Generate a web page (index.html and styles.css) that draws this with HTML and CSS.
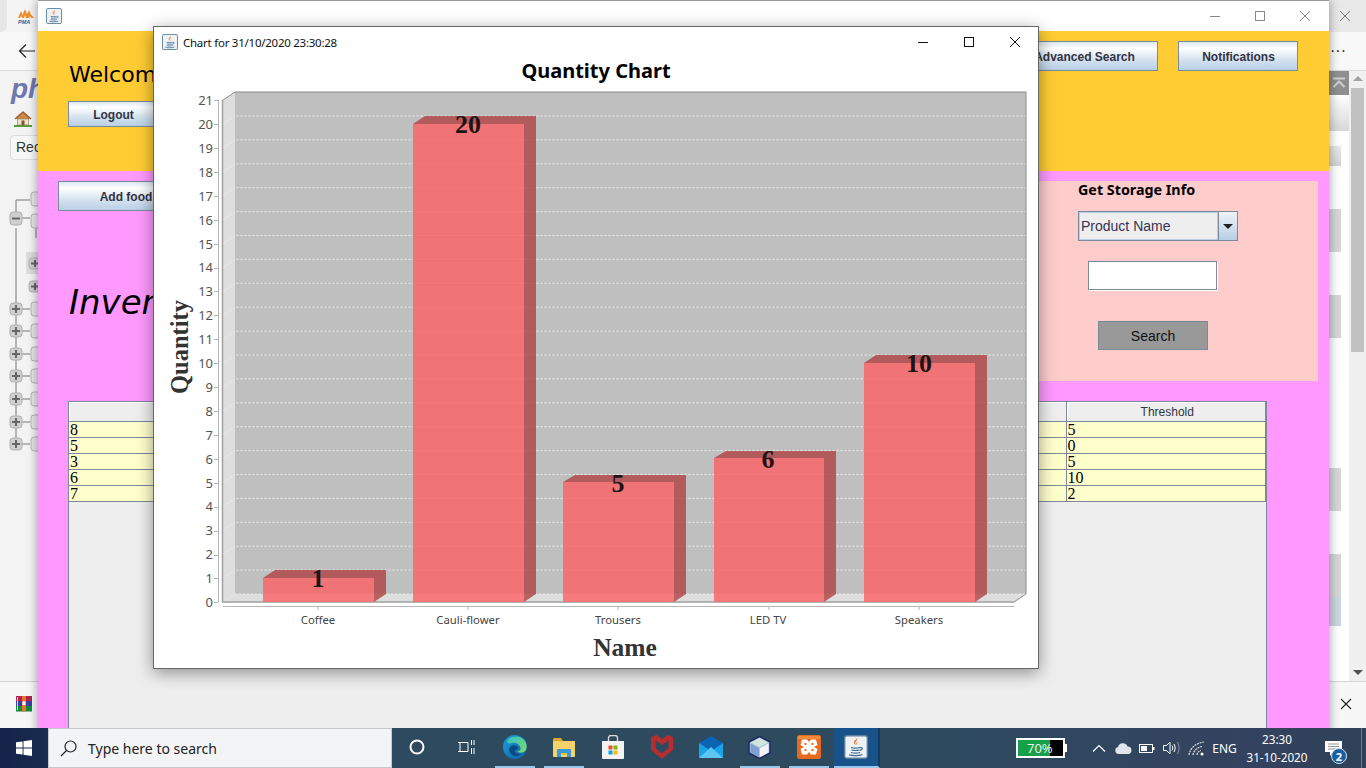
FILE: index.html
```html
<!DOCTYPE html>
<html lang="en">
<head>
    <meta charset="UTF-8">
    <meta name="viewport" content="width=device-width, initial-scale=1.0">
    <title>Chart for 31/10/2020 23:30:28</title>
    <link rel="stylesheet" href="styles.css">
</head>
<body>
    <svg class="icon-defs" width="0" height="0">
        <symbol id="java-icon" viewBox="0 0 24 24">
            <rect x="0.7" y="0.7" width="22.6" height="22.6" rx="2" fill="#eef2f5" stroke="#5d7f9c" stroke-width="1.4"/>
            <path d="M13 3c1.5 2-2.5 3.500-1.500 6 .4 1 1 1.500 1 1.500-2-1-3-2.500-2.300-4.200C10.800 5 12.800 4.500 13 3z" fill="#e8762b"/>
            <path d="M15 6.500c-2 1-3 2-2.200 3.500-.9-.5-1.100-1.600-.4-2.300.6-.6 1.600-.9 2.600-1.200z" fill="#e8762b"/>
            <path d="M7 12.500c2 .6 7 .6 9 0M7.500 15c2 .5 6 .5 8 0M7 17.500c2 .6 7 .6 9 0M5 19.800c3 1.200 10 1.200 13.500-.3M16 12.700c2-.5 3 .5 1.800 1.700-.5.500-1.300.8-2 1" fill="none" stroke="#3d6a94" stroke-width="1.200"/>
        </symbol>
    </svg>

    <div class="desktop">
        <!-- browser behind everything -->
        <div class="browser">
            <div class="tabstrip">
                <div class="tab-left"></div>
                <svg class="pma-logo" width="18" height="16" viewBox="0 0 18 16">
                    <path d="M1 10 4 3l1.500 4L8 1l2 5 2-4 1.500 4L17 10h-3l-1-2-1 2H9L8 7l-1 3H5L4 8l-1 2z" fill="#f0902c"/>
                    <text x="1" y="15.500" class="pma-text">PMA</text>
                </svg>
                <div class="tab-spacer"></div>
                <div class="tab-close">
                    <svg width="12" height="12" viewBox="0 0 12 12"><path d="M1 1l10 10M11 1 1 11" stroke="#777" stroke-width="1" fill="none"/></svg>
                </div>
            </div>
            <div class="toolbar">
                <svg class="back-arrow" width="18" height="16" viewBox="0 0 18 16"><path d="M17 8H2M8 1.500 1.500 8 8 14.500" stroke="#222" stroke-width="1.200" fill="none"/></svg>
                <span class="dots">&middot;&middot;&middot;</span>
            </div>
            <div class="browser-main">
                <div class="pma-side">
                    <div class="pma-brand">ph</div>
                    <svg class="home-icon" width="18" height="16" viewBox="0 0 18 16">
                        <path d="M1 8 9 1l8 7" fill="#c98a4a" stroke="#a5602a" stroke-width="1.500"/>
                        <path d="M3.500 8h11v6h-11z" fill="#f1e4c8" stroke="#8a7a5a" stroke-width=".6"/>
                        <path d="M7.500 9.500h3V14h-3z" fill="#7a5a3a"/>
                        <path d="M0 15h18" stroke="#5a9a3a" stroke-width="2"/>
                    </svg>
                    <div class="recent-btn">Rec</div>
                    <svg class="tree" width="38" height="280" viewBox="0 0 38 280">
                        <path d="M16 30V12H30M16 30H30M36 40V50M16 40V258M16 121H30M16 143H30M16 166H30M16 188H30M16 211H30M16 234H30M16 256H30" stroke="#777" fill="none"/>
                        <g class="tree-db">
                            <rect x="31" y="4" width="10" height="14" rx="3"/>
                            <rect x="31" y="26" width="10" height="14" rx="3"/>
                            <rect x="31" y="114" width="10" height="14" rx="3"/>
                            <rect x="31" y="136" width="10" height="14" rx="3"/>
                            <rect x="31" y="159" width="10" height="14" rx="3"/>
                            <rect x="31" y="181" width="10" height="14" rx="3"/>
                            <rect x="31" y="204" width="10" height="14" rx="3"/>
                            <rect x="31" y="227" width="10" height="14" rx="3"/>
                            <rect x="31" y="249" width="10" height="14" rx="3"/>
                        </g>
                        <rect x="26" y="64" width="12" height="22" fill="#ddd"/>
                        <g class="tree-toggle">
                            <rect x="10" y="24" width="12" height="13" rx="3"/>
                            <rect x="29" y="70" width="12" height="11" rx="3"/>
                            <rect x="29" y="93" width="12" height="11" rx="3"/>
                            <rect x="10" y="115" width="12" height="12" rx="3"/>
                            <rect x="10" y="137" width="12" height="12" rx="3"/>
                            <rect x="10" y="160" width="12" height="12" rx="3"/>
                            <rect x="10" y="182" width="12" height="12" rx="3"/>
                            <rect x="10" y="205" width="12" height="12" rx="3"/>
                            <rect x="10" y="228" width="12" height="12" rx="3"/>
                            <rect x="10" y="250" width="12" height="12" rx="3"/>
                        </g>
                        <path class="tree-sign" d="M12 30.500h8M31 75.500h8M35 72v7M31 98.500h8M35 95v7M12 121h8M16 117v8M12 143h8M16 139v8M12 166h8M16 162v8M12 188h8M16 184v8M12 211h8M16 207v8M12 234h8M16 230v8M12 256h8M16 252v8"/>
                    </svg>
                </div>
                <div class="pma-spacer"></div>
                <div class="pma-right">
                    <div class="collapse-btn">
                        <svg width="14" height="12" viewBox="0 0 14 12"><path d="M1 1.500h12M1.500 10 7 4.500 12.500 10" stroke="#cfcfcf" stroke-width="2" fill="none"/></svg>
                    </div>
                    <div class="pane-head"></div>
                    <div class="band band-a"></div>
                    <div class="band band-b"></div>
                    <div class="band band-c"></div>
                    <div class="band band-d"></div>
                    <div class="band band-e"></div>
                    <div class="band band-blue"></div>
                </div>
                <div class="pma-scroll">
                    <div class="arrow-up"></div>
                    <div class="scroll-thumb"></div>
                    <div class="arrow-down"></div>
                </div>
            </div>
            <div class="shelf">
                <svg width="16" height="16" viewBox="0 0 16 16">
                    <rect y="0" width="16" height="5" fill="#b3234f"/>
                    <rect y="5" width="16" height="5" fill="#3c3fa5"/>
                    <rect y="10" width="16" height="5.500" fill="#128a3c"/>
                    <rect x="6" width="4" height="15.500" fill="#e8752a"/>
                    <rect x="6.500" y="5.500" width="3" height="3.500" fill="#fff"/>
                    <rect x="1" y="1" width="1" height="13" fill="#f3e27a"/>
                </svg>
                <svg width="12" height="12" viewBox="0 0 12 12"><path d="M1 1l10 10M11 1 1 11" stroke="#222" stroke-width="1.100" fill="none"/></svg>
            </div>
        </div>

        <!-- java main window -->
        <div class="app-window">
            <div class="titlebar app-title">
                <svg class="title-icon" width="16" height="16"><use href="#java-icon"/></svg>
                <div class="win-controls">
                    <svg width="12" height="12" viewBox="0 0 12 12"><path d="M1 6.500h10" stroke="#888"/></svg>
                    <svg width="12" height="12" viewBox="0 0 12 12"><rect x="1.500" y="1.500" width="9" height="9" fill="none" stroke="#888"/></svg>
                    <svg width="12" height="12" viewBox="0 0 12 12"><path d="M1 1l10 10M11 1 1 11" stroke="#888" fill="none"/></svg>
                </div>
            </div>
            <div class="app-head">
                <div class="head-left">
                    <div class="welcome">Welcome</div>
                    <button class="java-btn logout-btn">Logout</button>
                </div>
                <div class="head-right">
                    <button class="java-btn advanced-btn">Advanced Search</button>
                    <button class="java-btn notify-btn">Notifications</button>
                </div>
            </div>
            <div class="app-body">
                <div class="body-top">
                    <div class="body-left">
                        <button class="java-btn add-btn">Add food</button>
                        <div class="inventory">Inventory</div>
                    </div>
                    <div class="storage-panel">
                        <div class="storage-title">Get Storage Info</div>
                        <div class="combo">
                            <span class="combo-value">Product Name</span>
                            <span class="combo-arrow"></span>
                        </div>
                        <input class="storage-input" type="text">
                        <button class="search-btn">Search</button>
                    </div>
                </div>
                <div class="stock-wrap">
                    <table class="stock-table">
                        <tr>
                            <th></th><th></th><th></th><th></th><th></th><th>Threshold</th>
                        </tr>
                        <tr><td>8</td><td></td><td></td><td></td><td></td><td>5</td></tr>
                        <tr><td>5</td><td></td><td></td><td></td><td></td><td>0</td></tr>
                        <tr><td>3</td><td></td><td></td><td></td><td></td><td>5</td></tr>
                        <tr><td>6</td><td></td><td></td><td></td><td></td><td>10</td></tr>
                        <tr><td>7</td><td></td><td></td><td></td><td></td><td>2</td></tr>
                    </table>
                </div>
            </div>
        </div>

        <!-- chart window -->
        <div class="chart-window">
            <div class="titlebar chart-title">
                <svg class="title-icon" width="16" height="16"><use href="#java-icon"/></svg>
                <span class="title-text">Chart for 31/10/2020 23:30:28</span>
                <div class="win-controls">
                    <svg width="12" height="12" viewBox="0 0 12 12"><path d="M1 6.500h10" stroke="#111"/></svg>
                    <svg width="12" height="12" viewBox="0 0 12 12"><rect x="1.500" y="1.500" width="9" height="9" fill="none" stroke="#111"/></svg>
                    <svg width="12" height="12" viewBox="0 0 12 12"><path d="M1 1l10 10M11 1 1 11" stroke="#111" fill="none"/></svg>
                </div>
            </div>
            <svg class="chart" width="884" height="611" viewBox="154 57 884 611">
                <text x="596" y="78" text-anchor="middle" class="chart-heading">Quantity Chart</text>

                <!-- plot walls -->
                <rect x="235" y="92" width="791" height="502" fill="#bfbfbf"/>
                <path d="M223 100 235 92V594L223 602z" fill="#dedede"/>
                <path d="M223 602 235 594H1026L1014 602z" fill="#dedede"/>
                <path class="gridlines" d="M223 578.100 235 570.100H1026M223 554.200 235 546.200H1026M223 530.300 235 522.300H1026M223 506.400 235 498.400H1026M223 482.500 235 474.500H1026M223 458.600 235 450.600H1026M223 434.700 235 426.700H1026M223 410.800 235 402.800H1026M223 386.900 235 378.900H1026M223 363 235 355H1026M223 339.100 235 331.100H1026M223 315.200 235 307.200H1026M223 291.300 235 283.300H1026M223 267.400 235 259.400H1026M223 243.500 235 235.500H1026M223 219.600 235 211.600H1026M223 195.700 235 187.700H1026M223 171.800 235 163.800H1026M223 147.900 235 139.900H1026M223 124 235 116H1026M235 594H1026"/>
                <path d="M223 100 235 92H1026V594L1014 602" fill="none" stroke="#8a8a8a"/>
                <path d="M222.500 100V602H1014" fill="none" stroke="#a0a0a0" stroke-width="1.500"/>

                <!-- axes -->
                <path class="axis" d="M218.500 100V602M214 100.500H218M214 124.500H218M214 148.500H218M214 172.500H218M214 196.500H218M214 220.500H218M214 244.500H218M214 268.500H218M214 291.500H218M214 315.500H218M214 339.500H218M214 363.500H218M214 387.500H218M214 411.500H218M214 435.500H218M214 459.500H218M214 483.500H218M214 507.500H218M214 531.500H218M214 555.500H218M214 578.500H218M214 602.500H218"/>
                <path class="axis" d="M223 606.500H1014M318 606V610M468 606V610M618 606V610M769 606V610M919 606V610"/>
                <g class="tick-labels" text-anchor="end">
                    <text x="213" y="105">21</text><text x="213" y="129">20</text><text x="213" y="153">19</text>
                    <text x="213" y="177">18</text><text x="213" y="201">17</text><text x="213" y="225">16</text>
                    <text x="213" y="249">15</text><text x="213" y="272">14</text><text x="213" y="296">13</text>
                    <text x="213" y="320">12</text><text x="213" y="344">11</text><text x="213" y="368">10</text>
                    <text x="213" y="392">9</text><text x="213" y="416">8</text><text x="213" y="440">7</text>
                    <text x="213" y="464">6</text><text x="213" y="488">5</text><text x="213" y="511">4</text>
                    <text x="213" y="535">3</text><text x="213" y="559">2</text><text x="213" y="583">1</text>
                    <text x="213" y="607">0</text>
                </g>
                <g class="category-labels" text-anchor="middle">
                    <text x="318" y="624">Coffee</text><text x="468" y="624">Cauli-flower</text>
                    <text x="618" y="624">Trousers</text><text x="768" y="624">LED TV</text>
                    <text x="919" y="624">Speakers</text>
                </g>

                <!-- bars: front, top, side -->
                <g class="bar-shade">
                    <path d="M263 578 275 570H386L374 578zM374 578 386 570V594L374 602z"/>
                    <path d="M413 124 425 116H536L524 124zM524 124 536 116V594L524 602z"/>
                    <path d="M563 482 575 475H686L674 482zM674 482 686 475V594L674 602z"/>
                    <path d="M714 458 726 451H836L824 458zM824 458 836 451V594L824 602z"/>
                    <path d="M864 363 876 355H987L975 363zM975 363 987 355V594L975 602z"/>
                </g>
                <g class="bar-front">
                    <rect x="263" y="578" width="111" height="24"/>
                    <rect x="413" y="124" width="111" height="478"/>
                    <rect x="563" y="482" width="111" height="120"/>
                    <rect x="714" y="458" width="110" height="144"/>
                    <rect x="864" y="363" width="111" height="239"/>
                </g>
                <g class="bar-values" text-anchor="middle">
                    <text x="318" y="587">1</text><text x="468" y="133">20</text>
                    <text x="618" y="492">5</text><text x="768" y="468">6</text>
                    <text x="919" y="372">10</text>
                </g>

                <text x="625" y="656" text-anchor="middle" class="axis-title">Name</text>
                <text transform="translate(188 347) rotate(-90)" text-anchor="middle" class="axis-title axis-title-y">Quantity</text>
            </svg>
        </div>
    </div>

    <div class="taskbar">
        <div class="start-btn">
            <svg width="16" height="16" viewBox="0 0 16 16"><path d="M0 2.300 6.600 1.400V7.600H0zM7.500 1.300 16 0V7.600H7.500zM0 8.400H6.600V14.600L0 13.700zM7.500 8.400H16V16L7.500 14.700z" fill="#fff"/></svg>
        </div>
        <div class="search-box">
            <svg width="17" height="17" viewBox="0 0 17 17"><circle cx="10.500" cy="6.500" r="5.500" fill="none" stroke="#222" stroke-width="1.200"/><path d="M6.500 10.500 1 16" stroke="#222" stroke-width="1.300"/></svg>
            <span>Type here to search</span>
        </div>
        <div class="task-icon">
            <svg width="16" height="16" viewBox="0 0 16 16"><circle cx="8" cy="8" r="6.500" fill="none" stroke="#fff" stroke-width="2"/></svg>
        </div>
        <div class="task-icon">
            <svg width="18" height="16" viewBox="0 0 18 16"><path d="M1 3.500h10M1 12.500h10M3 3.500v9h8M11 3.500v9M14.500 1v5M14.500 9v6M17 1v5M17 9v6" fill="none" stroke="#fff" stroke-width="1"/></svg>
        </div>
        <div class="task-icon running">
            <svg width="24" height="24" viewBox="0 0 24 24">
                <defs>
                    <linearGradient id="edge-a" x1="0" y1="0" x2="1" y2="1"><stop offset="0" stop-color="#1f9fd8"/><stop offset="1" stop-color="#0c5fa8"/></linearGradient>
                    <linearGradient id="edge-b" x1="0" y1="0" x2="1" y2="1"><stop offset="0" stop-color="#35c1d0"/><stop offset="1" stop-color="#7fdc5c"/></linearGradient>
                </defs>
                <circle cx="12" cy="12" r="12" fill="url(#edge-a)"/>
                <path d="M4 6C8 0 18 0 22 6c2.500 4 2 9-1 11-3 1.500-6.500.5-6.500-1 2 .5 3.500-1 3-3-.5-4-5-6-9-5-2 .5-3.500 1-4.500-2z" fill="url(#edge-b)"/>
                <path d="M6 15c0-4 5-6 8-4 1.500 1 1.500 3 0 3.500-2 .5-3 1.500-1 3.500 1 1 3 1.500 5 1-4 4-10 2.500-12-4z" fill="#0b4a86"/>
            </svg>
        </div>
        <div class="task-icon running">
            <svg width="22" height="19" viewBox="0 0 22 19">
                <path d="M0 1.500C0 .7.700 0 1.500 0H8l2 3h10.500c.8 0 1.500.7 1.500 1.500V7H0z" fill="#e0a526"/>
                <path d="M0 3h22v15a1 1 0 0 1-1 1H1a1 1 0 0 1-1-1z" fill="#f5d26b"/>
                <path d="M4 17v-5c0-.6.400-1 1-1h12c.6 0 1 .4 1 1v7h-4v-4H8v4H4z" fill="#3a9ad9"/>
                <path d="M8 15h6v2H8z" fill="#f3c234"/>
            </svg>
        </div>
        <div class="task-icon">
            <svg width="24" height="24" viewBox="0 0 24 24">
                <path d="M7.500 6V3c0-1.500 1-2.500 2.500-2.500h4c1.500 0 2.500 1 2.500 2.500v3" fill="none" stroke="#d9d9d9" stroke-width="1.400"/>
                <path d="M1 6h22v17a1 1 0 0 1-1 1H2a1 1 0 0 1-1-1z" fill="#f3f3f3"/>
                <rect x="7.500" y="10.500" width="4" height="4" fill="#e8502a"/>
                <rect x="12.500" y="10.500" width="4" height="4" fill="#7fba00"/>
                <rect x="7.500" y="15.500" width="4" height="4" fill="#00a4ef"/>
                <rect x="12.500" y="15.500" width="4" height="4" fill="#ffb900"/>
            </svg>
        </div>
        <div class="task-icon">
            <svg width="22" height="24" viewBox="0 0 22 24"><path d="M0 2 5.500 0 11 4 16.500 0 22 2V15L11 24 0 15zM4.500 5.500V13L11 18.500 17.500 13V5.500L11 10z" fill="#b52d2f" fill-rule="evenodd"/></svg>
        </div>
        <div class="task-icon">
            <svg width="24" height="22" viewBox="0 0 24 22">
                <path d="M0 7 12 0 24 7 12 15z" fill="#0a63b3"/>
                <path d="M0 7 12 15 24 7V22H0z" fill="#1ba3ea"/>
                <path d="M0 22 12 11 24 22z" fill="#5cc6f3"/>
            </svg>
        </div>
        <div class="task-icon running">
            <svg width="23" height="23" viewBox="0 0 23 23">
                <path d="M11.500.5 22 6V17L11.500 22.500 1 17V6z" fill="#a9c6dd" stroke="#1f2a5c" stroke-width="1.500"/>
                <path d="M11.500 2 20.500 6.500 11.500 11 2.500 6.500z" fill="#cfe6dd"/>
                <path d="M2.500 7.500 11 12V21L2.500 16.500z" fill="#7e9fd0"/>
                <path d="M20.500 7.500 12 12V21L20.500 16.500z" fill="#f2f4f6"/>
            </svg>
        </div>
        <div class="task-icon running">
            <svg width="24" height="24" viewBox="0 0 24 24">
                <rect width="24" height="24" rx="2.500" fill="#e86a1f"/>
                <rect x="1" y="1" width="22" height="3" fill="#f28a3c"/>
                <path d="M5 4.500h5L12 7l2-2.500h5l1.500 5.500-3.500 2 3.500 2-1.500 5.500h-5L12 17l-2 2.500H5L3.500 14 7 12 3.500 10zM7.500 8v2h2V8zM14.500 8v2h2V8zM7.500 14v2h2v-2zM14.500 14v2h2v-2z" fill="#fff" fill-rule="evenodd"/>
            </svg>
        </div>
        <div class="task-icon java-task">
            <svg width="24" height="24"><use href="#java-icon"/></svg>
        </div>

        <div class="tray">
            <div class="tray-slot battery-slot">
                <div class="battery-meter"><span class="battery-fill"></span><span class="battery-text">70%</span></div>
                <div class="battery-cap"></div>
            </div>
            <div class="tray-slot">
                <svg width="14" height="8" viewBox="0 0 14 8"><path d="M1 7.500 7 1.500l6 6" fill="none" stroke="#fff" stroke-width="1.200"/></svg>
            </div>
            <div class="tray-slot">
                <svg width="17" height="11" viewBox="0 0 17 11"><path d="M3.500 11a3.500 3.500 0 0 1-.5-6.900A5 5 0 0 1 12.500 3.500 3.800 3.800 0 0 1 13.500 11z" fill="#dfe5ea"/></svg>
            </div>
            <div class="tray-slot">
                <svg width="16" height="9" viewBox="0 0 16 9"><rect x=".5" y=".5" width="13" height="8" fill="none" stroke="#fff"/><rect x="2" y="2" width="6" height="5" fill="#fff"/><rect x="14" y="3" width="1.500" height="3" fill="#fff"/></svg>
            </div>
            <div class="tray-slot">
                <svg width="17" height="14" viewBox="0 0 17 14"><path d="M.5 4.500h3L7 1v12L3.500 9.500h-3z" fill="none" stroke="#fff"/><path d="M9 4.500c1 1.500 1 3.500 0 5M11 3c1.500 2.500 1.500 5.500 0 8" fill="none" stroke="#fff"/><path d="M14.500 1c2 3.500 2 8.500 0 12" fill="none" stroke="#8a98a5"/></svg>
            </div>
            <div class="tray-slot wifi-slot">
                <svg width="18" height="15" viewBox="0 0 18 15"><path d="M1 14C2 7 8 2 16 1M5 14C5.500 10 9 6.500 14 5.500M9 14c0-2 1.500-4 4-4.500" fill="none" stroke="#e6e6e6" stroke-width="1.200" stroke-dasharray="2 .8"/><circle cx="14" cy="13" r="1.500" fill="#fff"/></svg>
            </div>
            <div class="tray-slot lang-slot">ENG</div>
            <div class="tray-slot clock-slot">
                <span>23:30</span>
                <span>31-10-2020</span>
            </div>
            <div class="tray-slot notify-slot">
                <svg width="17" height="15" viewBox="0 0 17 15"><path d="M0 0h17v11H8l-3 4v-4H0z" fill="#fff"/><path d="M3 3h11M3 5.500h11M3 8h8" stroke="#777" stroke-width=".8"/></svg>
                <span class="notify-badge">2</span>
            </div>
            <div class="show-desktop"></div>
        </div>
    </div>
</body>
</html>
```

FILE: styles.css
```css
* {
    box-sizing: border-box;
}
html, body {
    margin: 0;
    padding: 0;
}
body {
    width: 1366px;
    height: 768px;
    overflow: hidden;
    font-family: "Liberation Sans", Arial, sans-serif;
    background-color: #f3f3f3;
}
.icon-defs {
    position: absolute;
}
.desktop {
    position: relative;
    width: 1366px;
    height: 728px;
    overflow: hidden;
}

/* browser */
.browser {
    display: flex;
    flex-direction: column;
    height: 728px;
    background-color: #f7f7f7;
}
.tabstrip {
    display: flex;
    align-items: center;
    height: 32px;
    background-color: #f4f4f4;
}
.tab-left {
    width: 7px;
    height: 32px;
    background-color: #e6e6e6;
    border-bottom-right-radius: 6px;
}
.pma-logo {
    margin-left: 10px;
    margin-top: -1px;
}
.pma-text {
    font-family: "Liberation Sans", sans-serif;
    font-size: 5.5px;
    font-weight: bold;
    font-style: italic;
    fill: #3b5a9a;
}
.tab-spacer {
    flex: 1;
}
.tab-close {
    display: flex;
    align-items: center;
    justify-content: center;
    width: 48px;
    height: 32px;
    padding-left: 6px;
    background-color: #e8e8e8;
}
.toolbar {
    display: flex;
    align-items: center;
    justify-content: space-between;
    height: 39px;
    padding: 0 20px 0 18px;
    background-color: #f8f8f8;
    border-bottom: 1px solid #dcdcdc;
}
.dots {
    font-size: 16px;
    color: #222;
}
.browser-main {
    display: flex;
    flex: 1;
    min-height: 0;
}
.pma-side {
    width: 38px;
    padding: 1px 0 0 0;
    overflow: hidden;
    background-color: #f3f3f3;
}
.pma-brand {
    margin-left: 11px;
    height: 34px;
    font-size: 28px;
    line-height: 34px;
    font-weight: bold;
    font-style: italic;
    color: #6c78af;
}
.home-icon {
    display: block;
    margin: 5px 0 0 14px;
}
.recent-btn {
    width: 40px;
    height: 25px;
    margin: 8px 0 0 10px;
    padding-left: 5px;
    font-size: 14px;
    line-height: 23px;
    color: #333;
    background-color: #f7f7f7;
    border: 1px solid #dcdcdc;
    border-radius: 4px;
}
.tree {
    display: block;
    margin-top: 28px;
}
.tree-db rect {
    fill: #e6e6e6;
    stroke: #b5b5b5;
}
.tree-toggle rect {
    fill: #cfcfcf;
    stroke: #b0b0b0;
}
.tree-sign {
    fill: none;
    stroke: #666;
    stroke-width: 2;
}
.pma-spacer {
    flex: 1;
}
.pma-right {
    width: 20px;
    background-color: #fff;
}
.collapse-btn {
    display: flex;
    align-items: center;
    justify-content: center;
    height: 24px;
    background-color: #8f8f8f;
}
.pane-head {
    height: 36px;
    background: linear-gradient(#fdfdfd, #d8d8d8);
}
.band {
    width: 12px;
    background-color: #d6d6d6;
}
.band-a {
    height: 20px;
    margin-top: 15px;
    background: linear-gradient(#e8e8e8, #d4d4d4);
}
.band-b {
    height: 43px;
    margin-top: 43px;
}
.band-c {
    height: 43px;
    margin-top: 43px;
}
.band-d {
    height: 43px;
    margin-top: 130px;
}
.band-e {
    height: 43px;
    margin-top: 43px;
}
.band-blue {
    height: 29px;
    background-color: #cbd6e0;
}
.pma-scroll {
    display: flex;
    flex-direction: column;
    align-items: center;
    width: 17px;
    padding: 5px 0 6px;
    background-color: #f0f0f0;
}
.arrow-up {
    width: 0;
    height: 0;
    border-left: 5px solid transparent;
    border-right: 5px solid transparent;
    border-bottom: 5px solid #a0a0a0;
}
.scroll-thumb {
    width: 13px;
    height: 264px;
    margin-top: 7px;
    background-color: #c0c0c0;
}
.arrow-down {
    width: 0;
    height: 0;
    margin-top: auto;
    border-left: 5px solid transparent;
    border-right: 5px solid transparent;
    border-top: 5px solid #505050;
}
.shelf {
    display: flex;
    align-items: center;
    justify-content: space-between;
    height: 47px;
    padding: 0 14px 3px 16px;
    background-color: #f7f7f7;
    border-top: 1px solid #d4d4d4;
}

/* java windows */
.titlebar {
    display: flex;
    align-items: center;
    flex: none;
    background-color: #fff;
}
.win-controls {
    display: flex;
    margin-left: auto;
}
.app-window {
    position: absolute;
    left: 38px;
    top: 0;
    display: flex;
    flex-direction: column;
    width: 1291px;
    height: 760px;
    border-top: 1px solid #9a9a9a;
    box-shadow: 0 0 10px rgba(0, 0, 0, 0.4);
}
.app-title {
    height: 30px;
    padding-left: 8px;
}
.app-title .win-controls {
    gap: 33px;
    padding-right: 18px;
}
.app-head {
    display: flex;
    flex: none;
    justify-content: space-between;
    height: 140px;
    padding: 10px 31px 0 30px;
    background-color: #ffcc33;
}
.welcome {
    margin: 20px 0 0 1px;
    height: 28px;
    font-family: "DejaVu Sans", sans-serif;
    font-size: 22px;
    line-height: 28px;
    color: #000;
}
.java-btn {
    display: block;
    padding: 2px 0 0 1px;
    font-family: "Liberation Sans", Arial, sans-serif;
    font-size: 12px;
    font-weight: bold;
    color: #333344;
    border: 1px solid #7a8a9a;
    background: linear-gradient(#dde8f2 0%, #ffffff 22%, #d6e3ef 62%, #b8cfe5 100%);
}
.logout-btn {
    width: 90px;
    height: 26px;
    margin-top: 12px;
}
.head-right {
    display: flex;
    gap: 20px;
}
.advanced-btn {
    width: 148px;
    height: 30px;
}
.notify-btn {
    width: 120px;
    height: 30px;
}
.app-body {
    flex: 1;
    min-height: 0;
    padding: 10px 0 0 30px;
    background-color: #ff99ff;
}
.body-top {
    display: flex;
    justify-content: space-between;
    height: 200px;
    padding-right: 11px;
}
.body-left {
    margin-left: -10px;
}
.add-btn {
    width: 135px;
    height: 30px;
}
.inventory {
    margin: 67px 0 0 11px;
    height: 48px;
    font-family: "DejaVu Sans", sans-serif;
    font-size: 34px;
    font-style: italic;
    line-height: 48px;
    color: #000;
}
.storage-panel {
    display: flex;
    flex-direction: column;
    align-items: flex-start;
    width: 400px;
    padding-left: 160px;
    background-color: #ffcccc;
}
.storage-title {
    height: 30px;
    font-family: "Noto Sans", sans-serif;
    font-size: 14.3px;
    font-weight: bold;
    line-height: 17px;
    color: #000;
}
.combo {
    display: flex;
    width: 160px;
    height: 30px;
    border: 1px solid #7a8a9a;
}
.combo-value {
    flex: 1;
    padding-left: 1px;
    font-size: 14px;
    line-height: 26px;
    color: #333355;
    background-color: #eeeeee;
    border: 1px solid #b8cfe5;
}
.combo-arrow {
    display: flex;
    align-items: center;
    justify-content: center;
    width: 19px;
    background: linear-gradient(#eef3f8, #b8cfe5);
    border-left: 1px solid #7a8a9a;
}
.combo-arrow::after {
    content: "";
    border-left: 5px solid transparent;
    border-right: 5px solid transparent;
    border-top: 5px solid #222;
}
.storage-input {
    display: block;
    width: 129px;
    height: 29px;
    margin: 20px 0 0 10px;
    padding: 0;
    background-color: #fff;
    border: 1px solid #7a8a9a;
    outline: none;
    box-shadow: 1px 1px 0 #fff;
}
.search-btn {
    display: block;
    width: 110px;
    height: 29px;
    margin: 31px 0 0 20px;
    padding: 0;
    font-family: "Liberation Sans", Arial, sans-serif;
    font-size: 14px;
    color: #111;
    background-color: #999999;
    border: 1px solid #7a8a9a;
}
.stock-wrap {
    width: 1199px;
    height: 400px;
    margin-top: 20px;
    background-color: #eeeeee;
    border: 1px solid #7a8a9a;
}
.stock-table {
    width: 100%;
    table-layout: fixed;
    border-collapse: separate;
    border-spacing: 0;
}
.stock-table th {
    height: 20px;
    padding: 1px 0 0 3px;
    font-size: 12px;
    font-weight: normal;
    color: #333344;
    background-color: #eeeeee;
    border-right: 1px solid #7a8a9a;
    border-bottom: 1px solid #7a8a9a;
    box-shadow: inset 1px 1px 0 #fff;
}
.stock-table td {
    height: 16px;
    padding: 0 0 0 1px;
    overflow: hidden;
    font-family: "Liberation Serif", "Times New Roman", serif;
    font-size: 16px;
    line-height: 15px;
    color: #000;
    background-color: #ffffcc;
    border-right: 1px solid #7a8a9a;
    border-bottom: 1px solid #7a8a9a;
}

/* chart window */
.chart-window {
    position: absolute;
    left: 153px;
    top: 26px;
    width: 886px;
    height: 643px;
    background-color: #fff;
    border: 1px solid #666;
    box-shadow: 0 4px 16px rgba(0, 0, 0, 0.4);
}
.chart-title {
    height: 30px;
    padding-left: 8px;
}
.title-text {
    margin-left: 5px;
    font-family: "Noto Sans", sans-serif;
    font-size: 11.5px;
    letter-spacing: -0.25px;
    color: #111;
}
.chart-title .win-controls {
    gap: 34px;
    padding-right: 17px;
}
.chart {
    display: block;
}
.chart-heading {
    font-family: "Noto Sans", sans-serif;
    font-size: 20px;
    font-weight: bold;
    fill: #000;
}
.gridlines {
    fill: none;
    stroke: #eeeeee;
    stroke-dasharray: 2 2;
}
.axis {
    fill: none;
    stroke: #b5b5b5;
}
.tick-labels text {
    font-family: "Noto Sans", sans-serif;
    font-size: 13px;
    fill: #555;
}
.category-labels text {
    font-family: "Noto Sans", sans-serif;
    font-size: 11.3px;
    fill: #444;
}
.bar-shade path {
    fill: rgb(175, 65, 67);
    opacity: 0.8;
}
.bar-front rect {
    fill: rgb(252, 96, 100);
    opacity: 0.8;
}
.bar-values text {
    font-family: "Liberation Serif", "Times New Roman", serif;
    font-size: 26px;
    font-weight: bold;
    fill: #1f1414;
}
.axis-title {
    font-family: "Liberation Serif", "Times New Roman", serif;
    font-size: 25.5px;
    font-weight: bold;
    fill: #333;
}
.axis-title-y {
    font-size: 24.5px;
}

/* taskbar */
.taskbar {
    display: flex;
    align-items: stretch;
    height: 40px;
    color: #fff;
    background: linear-gradient(90deg, #14244a 0, #1d3354 6%, #2d4a5f 30%, #2e4a5f 70%, #34425f 92%, #2f4258 100%);
}
.start-btn {
    display: flex;
    align-items: center;
    justify-content: center;
    width: 48px;
}
.search-box {
    display: flex;
    align-items: center;
    gap: 11px;
    width: 344px;
    padding-left: 11px;
    font-family: "Noto Sans", sans-serif;
    font-size: 14px;
    color: #222;
    background-color: #f3f4f6;
    border: 1px solid #c5c8cc;
}
.task-icon {
    display: flex;
    align-items: center;
    justify-content: center;
    width: 40px;
    margin: 0 4.5px;
    border-bottom: 2px solid transparent;
}
.task-icon.running {
    border-bottom-color: #99c8ea;
}
.task-icon.java-task {
    width: 46px;
    margin: 0 0 0 1px;
    background-color: #17538a;
    border-bottom-color: #99c8ea;
    border-right: 2px solid #0f3c66;
}
.tray {
    display: flex;
    align-items: stretch;
    margin-left: auto;
}
.tray-slot {
    display: flex;
    align-items: center;
    justify-content: center;
    width: 24px;
}
.battery-slot {
    justify-content: flex-start;
    width: 71px;
}
.battery-meter {
    position: relative;
    width: 49px;
    height: 20px;
    background-color: #000;
    border: 2px solid #fff;
}
.battery-fill {
    display: block;
    width: 32px;
    height: 16px;
    background-color: #17a04a;
}
.battery-text {
    position: absolute;
    left: 9px;
    top: -1px;
    font-family: "Noto Sans", sans-serif;
    font-size: 13px;
    line-height: 18px;
    color: #e8f4e8;
}
.battery-cap {
    width: 2px;
    height: 8px;
    background-color: #fff;
}
.wifi-slot {
    width: 28px;
}
.lang-slot {
    width: 27px;
    font-family: "Noto Sans", sans-serif;
    font-size: 12px;
}
.clock-slot {
    flex-direction: column;
    gap: 2px;
    width: 78px;
    font-family: "Noto Sans", sans-serif;
    font-size: 11.7px;
    line-height: 16px;
}
.notify-slot {
    position: relative;
    width: 34px;
}
.notify-badge {
    position: absolute;
    left: 15px;
    top: 20px;
    width: 16px;
    height: 16px;
    font-family: "Noto Sans", sans-serif;
    font-size: 11px;
    font-weight: bold;
    line-height: 15px;
    text-align: center;
    color: #fff;
    background-color: #1a5fa0;
    border: 1px solid #cfe2f2;
    border-radius: 50%;
}
.show-desktop {
    width: 16px;
    background: linear-gradient(90deg, transparent 11px, #6a7c8c 11px, #6a7c8c 12px, transparent 12px);
}
```
